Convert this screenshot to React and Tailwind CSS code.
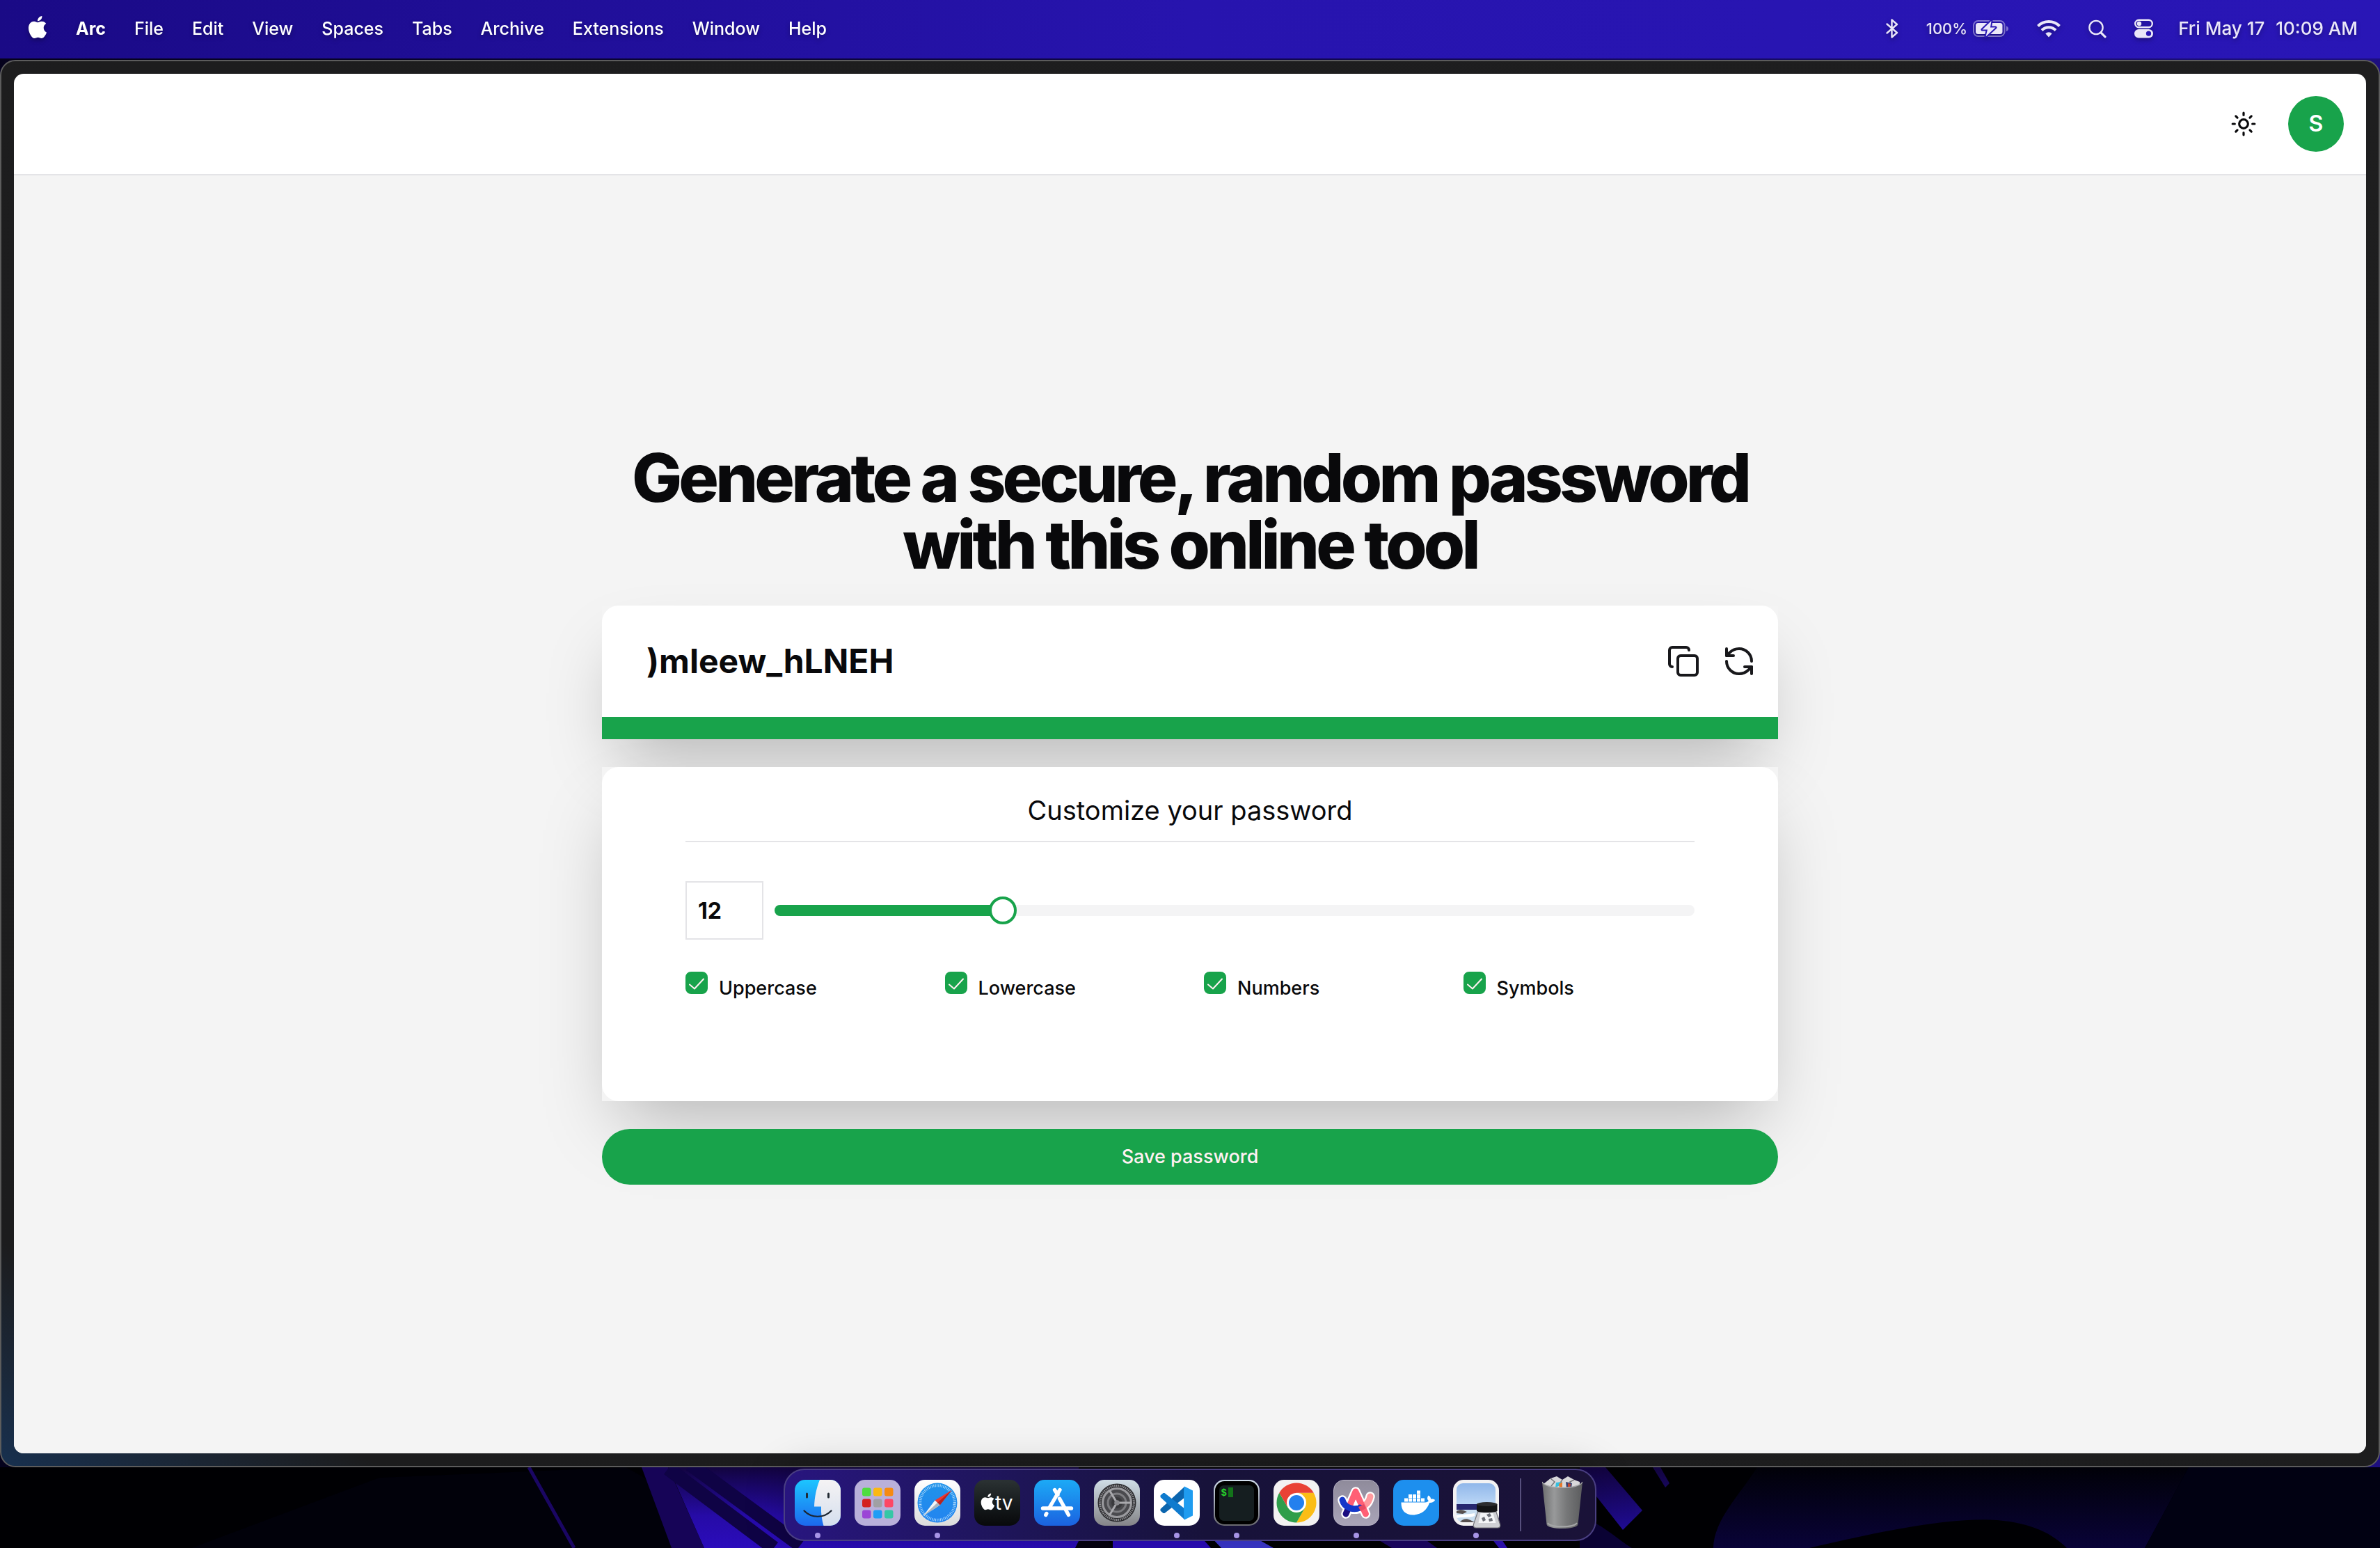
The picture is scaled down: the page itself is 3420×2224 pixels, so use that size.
import React, { useState } from "react";
import { Copy, RefreshCcw, Sun } from "lucide-react";

const APPLE_PATH =
  "M12.152 6.896c-.948 0-2.415-1.078-3.96-1.04-2.04.027-3.91 1.183-4.961 3.014-2.117 3.675-.546 9.103 1.519 12.09 1.013 1.454 2.208 3.09 3.792 3.039 1.52-.065 2.09-.987 3.935-.987 1.831 0 2.35.987 3.96.948 1.637-.026 2.676-1.48 3.676-2.948 1.156-1.688 1.636-3.325 1.662-3.415-.039-.013-3.182-1.221-3.22-4.857-.026-3.04 2.48-4.494 2.597-4.559-1.429-2.09-3.623-2.324-4.39-2.376-2-.156-3.675 1.09-4.61 1.09zM15.53 3.83c.843-1.012 1.4-2.427 1.245-3.83-1.207.052-2.662.805-3.532 1.818-.78.896-1.454 2.338-1.273 3.714 1.338.104 2.715-.688 3.559-1.701";

/* ---------- menu bar ---------- */

const MENUS = ["File", "Edit", "View", "Spaces", "Tabs", "Archive", "Extensions", "Window", "Help"];

function BluetoothIcon() {
  return (
    <svg width="18" height="30" viewBox="0 0 18 30" fill="none" stroke="currentColor" strokeWidth="2.4" strokeLinejoin="round" strokeLinecap="round">
      <path d="M1.5 8.5 16 21 8.5 27.5V2.5L16 9 1.5 21.500" />
    </svg>
  );
}

function BatteryIcon() {
  return (
    <svg width="52" height="26" viewBox="0 0 52 26" fill="none">
      <rect x="1" y="2" width="44.500" height="22" rx="6.500" stroke="currentColor" strokeOpacity=".45" strokeWidth="2" />
      <path d="M48 9.500c1.800.6 3 2 3 3.800s-1.200 3.200-3 3.800z" fill="currentColor" fillOpacity=".45" />
      <rect x="4" y="5" width="38.500" height="16" rx="3.500" fill="currentColor" />
      <path d="M26.500 2 13.500 14.500h7.500L18.500 24.500 32.500 11.500H25z" fill="currentColor" stroke="#2916b4" strokeWidth="4" strokeLinejoin="round" />
      <path d="M26.500 2 13.500 14.500h7.500L18.500 24.500 32.500 11.500H25z" fill="currentColor" />
    </svg>
  );
}

function WifiIcon() {
  return (
    <svg width="34" height="26" viewBox="0 0 34 26" fill="none" stroke="currentColor" strokeWidth="4">
      <path d="M1.500 9.500a22 22 0 0 1 31 0" />
      <path d="M7 15.500a14 14 0 0 1 20 0" />
      <path d="M17 25.500 12.300 20.200a6.800 6.800 0 0 1 9.400 0z" fill="currentColor" stroke="none" />
    </svg>
  );
}

function SearchIcon() {
  return (
    <svg width="26" height="27" viewBox="0 0 26 27" fill="none" stroke="currentColor" strokeLinecap="round">
      <circle cx="11" cy="11.500" r="9.600" strokeWidth="2.400" />
      <path d="m18 18.800 6 6" strokeWidth="3.200" />
    </svg>
  );
}

function ControlCenterIcon() {
  return (
    <svg width="27" height="28" viewBox="0 0 27 28" fill="none">
      <rect x="1.200" y="1.700" width="24.600" height="10.600" rx="5.300" stroke="currentColor" strokeWidth="2.400" />
      <circle cx="7" cy="7" r="3.200" fill="currentColor" />
      <rect y="15" width="27" height="12.500" rx="6.250" fill="currentColor" />
      <circle cx="20.500" cy="21.200" r="3.600" fill="#2916b4" />
    </svg>
  );
}

function MenuBar() {
  return (
    <header className="flex h-[84px] items-center justify-between bg-linear-to-r from-[#1a0a86] via-[#2714ae] to-[#2916b6] pr-8 pl-10 pb-[2px] leading-8 text-white">
      <nav aria-label="Menu bar" className="flex items-center gap-[41px] text-[25px] font-medium drop-shadow-[0_3px_3px_rgba(0,0,0,0.3)]">
        <a href="#apple" aria-label="Apple" className="mb-1">
          <svg width="28" height="32" viewBox="1.500 0 21 24" fill="currentColor"><path d={APPLE_PATH} /></svg>
        </a>
        <a href="#arc" className="font-bold">Arc</a>
        {MENUS.map((m) => (
          <a key={m} href={"#" + m.toLowerCase()}>{m}</a>
        ))}
      </nav>
      <div className="flex items-center gap-9 text-[26px] font-medium text-[#eae7f8] drop-shadow-[0_3px_3px_rgba(0,0,0,0.3)]">
        <div className="flex items-center gap-10">
          <BluetoothIcon />
          <div className="flex items-center gap-2">
            <span className="text-[22px]">100%</span>
            <BatteryIcon />
          </div>
          <WifiIcon />
          <SearchIcon />
          <ControlCenterIcon />
        </div>
        <div className="flex gap-4">
          <span>Fri May 17</span>
          <span>10:09 AM</span>
        </div>
      </div>
    </header>
  );
}

/* ---------- password page ---------- */

const OPTIONS = ["Uppercase", "Lowercase", "Numbers", "Symbols"];

function CheckOption({ label }) {
  const id = "opt-" + label.toLowerCase();
  return (
    <div className="flex items-start gap-4">
      <span className="relative block h-8 w-8">
        <input
          id={id}
          type="checkbox"
          defaultChecked
          className="peer block h-8 w-8 appearance-none rounded-lg border-2 border-[#18a34b] bg-white checked:bg-[#18a34b]"
        />
        <svg viewBox="0 0 32 32" className="pointer-events-none absolute inset-0 h-8 w-8 opacity-0 peer-checked:opacity-100" fill="none" stroke="#fff1f2" strokeWidth="2" strokeLinecap="round" strokeLinejoin="round">
          <path d="m6 18.500 7 6L26 10.500" />
        </svg>
      </span>
      <label htmlFor={id} className="text-[27px] leading-[48px] font-medium">{label}</label>
    </div>
  );
}

function PasswordPage() {
  const [length, setLength] = useState(12);
  const ratio = length / 50;
  const stop = `calc(20px + (100% - 40px) * ${ratio})`;
  return (
    <main className="flex flex-1 flex-col items-center justify-center gap-10 bg-[#f4f4f4] text-[#09090b]">
      <h1 className="text-center text-8xl leading-none font-extrabold tracking-tighter">
        Generate a secure, random password
        <br />
        with this online tool
      </h1>

      <section className="w-1/2 bg-[#f4f4f4] shadow-[0_50px_100px_-24px_rgba(0,0,0,0.25)]">
        <div className="flex h-40 items-center justify-between rounded-t-3xl bg-white pr-8 pl-16">
          <p className="text-5xl font-bold">)mleew_hLNEH</p>
          <div className="flex items-center gap-8 text-[#18181b]">
            <button type="button" aria-label="Copy password"><Copy size={48} strokeWidth={2} /></button>
            <button type="button" aria-label="Generate again"><RefreshCcw size={48} strokeWidth={2} /></button>
          </div>
        </div>
        <div className="h-8 bg-[#18a34b]" />
      </section>

      <section className="w-1/2 bg-[#f4f4f4] shadow-[0_50px_100px_-24px_rgba(0,0,0,0.25)]">
        <div className="min-h-[480px] rounded-3xl bg-white px-[120px] pt-[34px]">
          <h2 className="border-b-2 border-[#e4e4e7] pb-4 text-center text-[38px] leading-[56px]">Customize your password</h2>
          <div className="mt-14 flex items-center gap-4">
            <input
              type="text"
              inputMode="numeric"
              aria-label="Password length"
              value={length}
              onChange={(e) => setLength(Math.min(50, Number(e.target.value) || 0))}
              className="h-[84px] w-28 border-2 border-[#e4e4e7] bg-white px-4 text-[32px] font-bold"
            />
            <input
              type="range"
              aria-label="Password length slider"
              min="0"
              max="50"
              value={length}
              onChange={(e) => setLength(Number(e.target.value))}
              style={{ backgroundImage: `linear-gradient(to right, #18a34b ${stop}, #f4f4f5 ${stop})` }}
              className="h-4 min-w-0 flex-1 appearance-none rounded-full [&::-webkit-slider-thumb]:h-10 [&::-webkit-slider-thumb]:w-10 [&::-webkit-slider-thumb]:appearance-none [&::-webkit-slider-thumb]:rounded-full [&::-webkit-slider-thumb]:border-4 [&::-webkit-slider-thumb]:border-solid [&::-webkit-slider-thumb]:border-[#18a34b] [&::-webkit-slider-thumb]:bg-white"
            />
          </div>
          <div className="mt-[46px] grid grid-cols-4 gap-10">
            {OPTIONS.map((o) => <CheckOption key={o} label={o} />)}
          </div>
        </div>
      </section>

      <button type="button" className="h-20 w-1/2 rounded-full bg-[#18a34b] text-[27px] font-medium text-[#fff1f2]">
        Save password
      </button>
    </main>
  );
}

function BrowserWindow() {
  return (
    <div className="flex flex-1 flex-col rounded-[22px] border-2 border-[#5c5c5c] bg-linear-to-tr from-[#17304f] via-[#1c1c1d] via-8% to-[#1e1e1f] p-[18px]">
      <div className="flex flex-1 flex-col overflow-hidden rounded-[14px] bg-white">
        <header className="flex items-center justify-end gap-6 border-b-2 border-[#e4e4e7] px-8 py-8">
          <button type="button" aria-label="Toggle theme" className="flex h-20 w-20 items-center justify-center text-[#09090b]">
            <Sun size={38} strokeWidth={2} />
          </button>
          <button type="button" aria-label="Account" className="h-20 w-20 rounded-full bg-[#18a34b] text-[32px] font-semibold text-white">S</button>
        </header>
        <PasswordPage />
      </div>
    </div>
  );
}

/* ---------- dock ---------- */

const Tile = ({ children, label }) => (
  <svg viewBox="0 0 66 66" width="66" height="66" role="img" aria-label={label} overflow="visible">{children}</svg>
);

function Finder() {
  return (
    <Tile label="Finder">
      <defs>
        <linearGradient id="fa" x2="0" y2="1"><stop stopColor="#1cc6ff" /><stop offset="1" stopColor="#1c68ee" /></linearGradient>
        <linearGradient id="fb" x2="0" y2="1"><stop stopColor="#f5f3f4" /><stop offset="1" stopColor="#d5dfee" /></linearGradient>
        <clipPath id="fc"><rect width="66" height="66" rx="15" /></clipPath>
      </defs>
      <g clipPath="url(#fc)">
        <rect width="66" height="66" fill="url(#fa)" />
        <path d="M36 0C31 12 28.500 25 28 38.500h10C37.500 48 39 58 41.500 66H66V0z" fill="url(#fb)" />
      </g>
      <path d="M17.500 20v5M48.500 20v5" stroke="#222a33" strokeWidth="3" strokeLinecap="round" />
      <path d="M13.500 44.500C24 55.500 42 55.500 52.500 44.500" fill="none" stroke="#1b2430" strokeWidth="2.200" strokeLinecap="round" />
    </Tile>
  );
}

const PADS = ["#4fdc3f", "#fbb813", "#f68a12", "#d3201f", "#a0a0a4", "#fd4765", "#9b46d6", "#1e9df5", "#36c7a6"];
function Launchpad() {
  return (
    <Tile label="Launchpad">
      <rect width="66" height="66" rx="15" fill="#b9b0da" />
      {PADS.map((c, i) => (
        <rect key={c} x={11 + (i % 3) * 16} y={11.500 + Math.floor(i / 3) * 16} width="12.500" height="12" rx="3" fill={c} />
      ))}
    </Tile>
  );
}

function Safari() {
  return (
    <Tile label="Safari">
      <defs>
        <linearGradient id="sa" x2="0" y2="1"><stop stopColor="#fff" /><stop offset="1" stopColor="#dcdcdc" /></linearGradient>
        <linearGradient id="sb" x2="0" y2="1"><stop stopColor="#1f93ea" /><stop offset="1" stopColor="#2384f0" /></linearGradient>
      </defs>
      <rect width="66" height="66" rx="15" fill="url(#sa)" />
      <circle cx="33" cy="33" r="28.500" fill="url(#sb)" />
      <circle cx="33" cy="33" r="24.800" fill="none" stroke="#b9e0fb" strokeWidth="4" strokeDasharray=".9 1.500" />
      <path d="M53.500 15 29.500 29.500l7 7z" fill="#f0372f" />
      <path d="M53.500 15 33 33l3.500 3.500z" fill="#b52420" />
      <path d="M12.500 52 29.500 29.500l7 7z" fill="#f3f5f7" />
      <path d="M12.500 52 33 33l3.500 3.500z" fill="#a9b4bf" />
    </Tile>
  );
}

function AppleTv() {
  return (
    <Tile label="Apple TV">
      <defs><linearGradient id="ta" x2="0" y2="1"><stop stopColor="#2b3233" /><stop offset=".6" stopColor="#14181a" /><stop offset="1" stopColor="#08090b" /></linearGradient></defs>
      <rect width="66" height="66" rx="15" fill="url(#ta)" />
      <g transform="translate(7.500 19.500) scale(.99)" fill="#fff"><path d={APPLE_PATH} /></g>
      <text x="30" y="43" fill="#fff" fontFamily="Inter, sans-serif" fontSize="28" fontWeight="400">tv</text>
    </Tile>
  );
}

function AppStore() {
  return (
    <Tile label="App Store">
      <defs><linearGradient id="aa" x2="0" y2="1"><stop stopColor="#1caaf6" /><stop offset="1" stopColor="#1b62e0" /></linearGradient></defs>
      <rect width="66" height="66" rx="15" fill="url(#aa)" />
      <g stroke="#fff" strokeWidth="5.400" strokeLinecap="round">
        <path d="M37 14.500 22 40M17.800 48.500l-1 2M12.500 41h41M29.500 14.500l4.500 7" />
        <path d="M36.500 27 49.500 50.500" />
      </g>
    </Tile>
  );
}

function Settings() {
  return (
    <Tile label="System Settings">
      <defs><linearGradient id="ga" x2="0" y2="1"><stop stopColor="#cfdde6" /><stop offset="1" stopColor="#858588" /></linearGradient></defs>
      <rect width="66" height="66" rx="15" fill="url(#ga)" />
      <circle cx="33" cy="33" r="27.500" fill="#2d2d30" />
      <circle cx="33" cy="33" r="24.500" fill="none" stroke="#8e8e92" strokeWidth="3" strokeDasharray="1.500 1.200" />
      <circle cx="33" cy="33" r="20.500" fill="#4a4a4e" stroke="#9a9a9e" strokeWidth="3.200" />
      <circle cx="33" cy="33" r="13" fill="none" stroke="#7d7d81" strokeWidth="3" />
      <circle cx="33" cy="33" r="8" fill="#3a3a3d" />
      <path d="M33 33h20M33 33 22.500 15.500M33 33 22.500 50.500" stroke="#a9a9ad" strokeWidth="3" />
      <circle cx="33" cy="33" r="3.800" fill="#8a8a8e" />
    </Tile>
  );
}

function VsCode() {
  return (
    <Tile label="Visual Studio Code">
      <rect width="66" height="66" rx="15" fill="#fff" />
      <path d="M44 10 9.500 42v2.500l4 3.500h2L45 25z" fill="#0b65ae" />
      <path d="M44 57 9.500 25v-2.500l4-3.500h2L45 42z" fill="#0f7bce" />
      <path d="M44 9.500 56 15.500v36L44 57.500c-.6-.6-.9-1.300-.9-2.200V11.700c0-.9.3-1.600.9-2.200z" fill="#1f9cf0" />
    </Tile>
  );
}

function Terminal() {
  return (
    <Tile label="Terminal">
      <defs><linearGradient id="ra" x2="0" y2="1"><stop stopColor="#d3e0ee" /><stop offset="1" stopColor="#6a6a70" /></linearGradient></defs>
      <rect width="66" height="66" rx="15" fill="url(#ra)" />
      <rect x="2" y="2" width="62" height="62" rx="13.500" fill="#000" />
      <rect x="8" y="8" width="50" height="51" rx="6.500" fill="#151e20" />
      <text x="10.500" y="23" fill="#27d52c" fontFamily="Liberation Mono, monospace" fontWeight="700" fontSize="14">$</text>
      <rect x="21" y="11" width="7" height="14" fill="#13741a" />
    </Tile>
  );
}

function Chrome() {
  return (
    <Tile label="Chrome">
      <rect width="66" height="66" rx="15" fill="#f3f2f2" />
      <path d="M57.700 18.750A28.500 28.500 0 0 1 33 61.500L45.300 40.100 40 20l-7-1.250z" fill="#fbbd16" />
      <path d="M33 61.500A28.500 28.500 0 0 1 8.300 18.750L20.700 40.100 34 46l11.300-5.900z" fill="#2f9e4b" />
      <path d="M8.300 18.750a28.500 28.500 0 0 1 49.400 0H33L22 26l-1.300 14.100z" fill="#e94235" />
      <circle cx="33" cy="33" r="14" fill="#fff" />
      <circle cx="33" cy="33" r="11" fill="#2480ee" />
    </Tile>
  );
}

function Arc() {
  return (
    <Tile label="Arc">
      <defs><linearGradient id="ca" x2="0" y2="1"><stop stopColor="#8f8b9b" /><stop offset="1" stopColor="#a9a4b8" /></linearGradient></defs>
      <rect x=".5" y=".5" width="65" height="65" rx="14.500" fill="url(#ca)" stroke="#b9b4c6" />
      <g fill="none" strokeLinecap="round" strokeLinejoin="round">
        <path d="M18 49 32 17 46.500 49M13 29c5 19 35 18 40-5" stroke="#fff" strokeWidth="13.500" />
        <path d="M18 49l4-9" stroke="#1b0c80" strokeWidth="9" />
        <path d="M53 24c-1 6-4 10-8 13" stroke="#ff9a9f" strokeWidth="9" />
        <path d="M24 36 32 17 46.500 49" stroke="#ff5f75" strokeWidth="9" />
        <path d="M13 29c3 12 17 15 25 11" stroke="#1537c9" strokeWidth="9" />
        <path d="M40 37l3 6" stroke="#e84b63" strokeWidth="9" strokeLinecap="butt" />
      </g>
      <path d="m32 29 3.500 8h-7z" fill="#fff" />
    </Tile>
  );
}

function Docker() {
  return (
    <Tile label="Docker">
      <rect width="66" height="66" rx="15" fill="#1d8fee" />
      <path d="M11.500 32.500H46c2.500 0 4-1 5-2.200-2.500-2-2.500-5-.5-7.800 2.500 1.200 3.500 3 3.700 5.200 2.300-.6 4.500 0 6 1.400-1.600 3-4.500 4.200-8 4C48.500 43.500 40.500 50.500 28.500 50.500 17 50.500 11.300 44 11.500 32.500z" fill="#fff" />
      <g fill="#fff">
        {[16, 22, 28, 34, 40].map((x) => <rect key={x} x={x} y="26.500" width="5" height="5" />)}
        {[22, 28, 34].map((x) => <rect key={x} x={x} y="21" width="5" height="5" />)}
        <rect x="34" y="15.500" width="5" height="5" />
      </g>
    </Tile>
  );
}

function Preview() {
  return (
    <Tile label="Preview">
      <defs>
        <linearGradient id="pa" x2="0" y2="1"><stop stopColor="#90b7ea" /><stop offset="1" stopColor="#bcd7f6" /></linearGradient>
        <clipPath id="pc"><rect x="5" y="5" width="56" height="56" rx="9" /></clipPath>
      </defs>
      <rect width="66" height="66" rx="15" fill="#f3f2f3" />
      <g clipPath="url(#pc)">
        <rect x="5" y="5" width="56" height="31" fill="url(#pa)" />
        <rect x="5" y="35" width="56" height="10" fill="#27276f" />
        <rect x="5" y="43" width="56" height="20" fill="#c9def0" />
        <path d="M5 45c6-3 9-2 15 1l-6 3-9-1zM10 60c5-4 9-5 15-2l6 3H10z" fill="#57504f" />
        <path d="M5 51c8-2 18-1 26-3v4c-9 3-18 1-26 3z" fill="#fff" />
      </g>
      <path d="M35.500 46h26.500l5.500 18c.8 3-.5 5-3.500 5H33c-3 0-4.300-2-3.500-5z" fill="#cfd0d4" stroke="#76767c" strokeWidth="1.200" />
      <path d="M39.500 48h18l4 14H36.500z" fill="#f4f5f7" />
      <path d="m48 50 5-2 2 4-4 2zM41 55l4-2 2 5-4 2zM51 56l5-1 1 4-5 1z" fill="#6d7078" />
      <path d="M34 35h29.500v10c-6 2.800-23.500 2.800-29.500 0z" fill="#141416" />
      <ellipse cx="48.700" cy="35" rx="14.700" ry="3" fill="#2d2d30" />
    </Tile>
  );
}

function Trash() {
  return (
    <svg viewBox="0 0 58 78" width="58" height="78" role="img" aria-label="Trash">
      <defs>
        <linearGradient id="ua"><stop stopColor="#6c6d6e" /><stop offset=".3" stopColor="#98999a" /><stop offset=".6" stopColor="#777879" /><stop offset="1" stopColor="#5b5c5e" /></linearGradient>
      </defs>
      <path d="M2 12 12 4l9-3 8 5 8-5 9 5 8 3v9L29 22 4 15z" fill="#d8d8da" />
      <path d="m12 4 6 5-5 6M29 6l-4 6 4 6M46 6l-6 3 2 8" fill="none" stroke="#77777b" strokeWidth="1.500" />
      <path d="m20 10 9-1-3 5-7 3z" fill="#35bfe0" />
      <path d="m24 12 5-3v7l-4 2z" fill="#e8792d" />
      <path d="m34 9 9 2-1 6-7 1z" fill="#39406f" />
      <path d="m37 11 4 1-1 5-3-1z" fill="#c2432c" />
      <path d="M0 9c4 11 54 11 58 0l-6.500 61c-.8 8-44.200 8-45 0z" fill="url(#ua)" />
      <path d="M8 68c4 7 38 7 42 0" fill="none" stroke="#a5a6a7" strokeWidth="2" />
      <path d="M0 9c4 11 54 11 58 0" fill="none" stroke="#a6a7a9" strokeWidth="1.500" />
    </svg>
  );
}

const APPS = [
  [Finder, true], [Launchpad, false], [Safari, true], [AppleTv, false], [AppStore, false], [Settings, false],
  [VsCode, true], [Terminal, true], [Chrome, false], [Arc, true], [Docker, false], [Preview, true],
];

function Wallpaper() {
  return (
    <svg viewBox="0 0 3420 116" preserveAspectRatio="none" className="absolute inset-0 h-full w-full">
      <defs>
        <linearGradient id="wa" x2="0" y2="1"><stop stopColor="#12043f" /><stop offset=".6" stopColor="#260ba6" /><stop offset="1" stopColor="#2b0cbc" /></linearGradient>
        <linearGradient id="wb" x2="0" y2="1"><stop stopColor="#010108" /><stop offset="1" stopColor="#090338" /></linearGradient>
        <linearGradient id="wc" x2="0" y2="1"><stop stopColor="#12043f" /><stop offset="1" stopColor="#200c96" /></linearGradient>
      </defs>
      <rect width="3420" height="116" fill="#000003" />
      <path d="M545 15 275 116H1100L900 0z" fill="#01010a" />
      <path d="M760 0 825 116" stroke="#1a0663" strokeWidth="5" />
      <path d="M922 0h38l52 116h-47z" fill="#160457" />
      <path d="M960 0h590v116h-538l-40-90z" fill="url(#wa)" />
      <path d="M960 2 1112 116M992-4l158 116" stroke="#0f0345" strokeWidth="20" />
      <path d="M1545 116l6-12h40l8 12z" fill="#05020f" />
      <path d="M1599 116V98h125l16 18z" fill="#2b0cbc" />
      <path d="M1738 98h60l32 18h-75z" fill="#3c38cf" />
      <path d="M1970 98h70l25 18h-65z" fill="#1c0664" />
      <path d="M2140 98h14l12 18h-12z" fill="#2f11b8" />
      <path d="M2270 0h37l53 62-28 28-60-76zM2375 0h11l13 23-6 6z" fill="url(#wc)" />
      <path d="M2270 70c30 10 50 30 75 46h-75z" fill="#0b0336" />
      <path d="M2525 0c-25 40-62 75-63 116h138c110-26 210-45 270-40 50 4 80 20 100 40h112L3145 0z" fill="url(#wb)" />
      <path d="M3145 0h275v116h-338z" fill="#010112" />
    </svg>
  );
}

function Dock() {
  return (
    <footer className="relative flex justify-center px-4 pt-[2px] pb-[10px]">
      <Wallpaper />
      <div className="relative flex h-[104px] items-start rounded-[30px] border-2 border-[#4a3f82] bg-linear-to-r from-[#28157f] via-[#17123a] via-52% to-[#1a1238] pr-[18px] pl-[14px] shadow-[0_0_60px_rgba(0,0,0,0.2)]">
        <ul className="flex gap-5 pt-[14px]">
          {APPS.map(([Icon, running], i) => (
            <li key={i} className="flex flex-col items-center gap-[10px]">
              <Icon />
              {running && <span className="h-2 w-2 rounded-full bg-[#a794e6]" />}
            </li>
          ))}
        </ul>
        <div className="mx-[30px] mt-3 h-[76px] w-[2px] bg-[#564f7c]" />
        <div className="mt-2"><Trash /></div>
      </div>
    </footer>
  );
}

export default function App() {
  return (
    <div className="flex min-h-screen flex-col bg-[#0b0540] font-[Inter,sans-serif]">
      <MenuBar />
      <div className="flex flex-1 flex-col bg-linear-to-r from-[#05021c] to-[#1d0f80] pt-[2px]">
        <BrowserWindow />
      </div>
      <Dock />
    </div>
  );
}
